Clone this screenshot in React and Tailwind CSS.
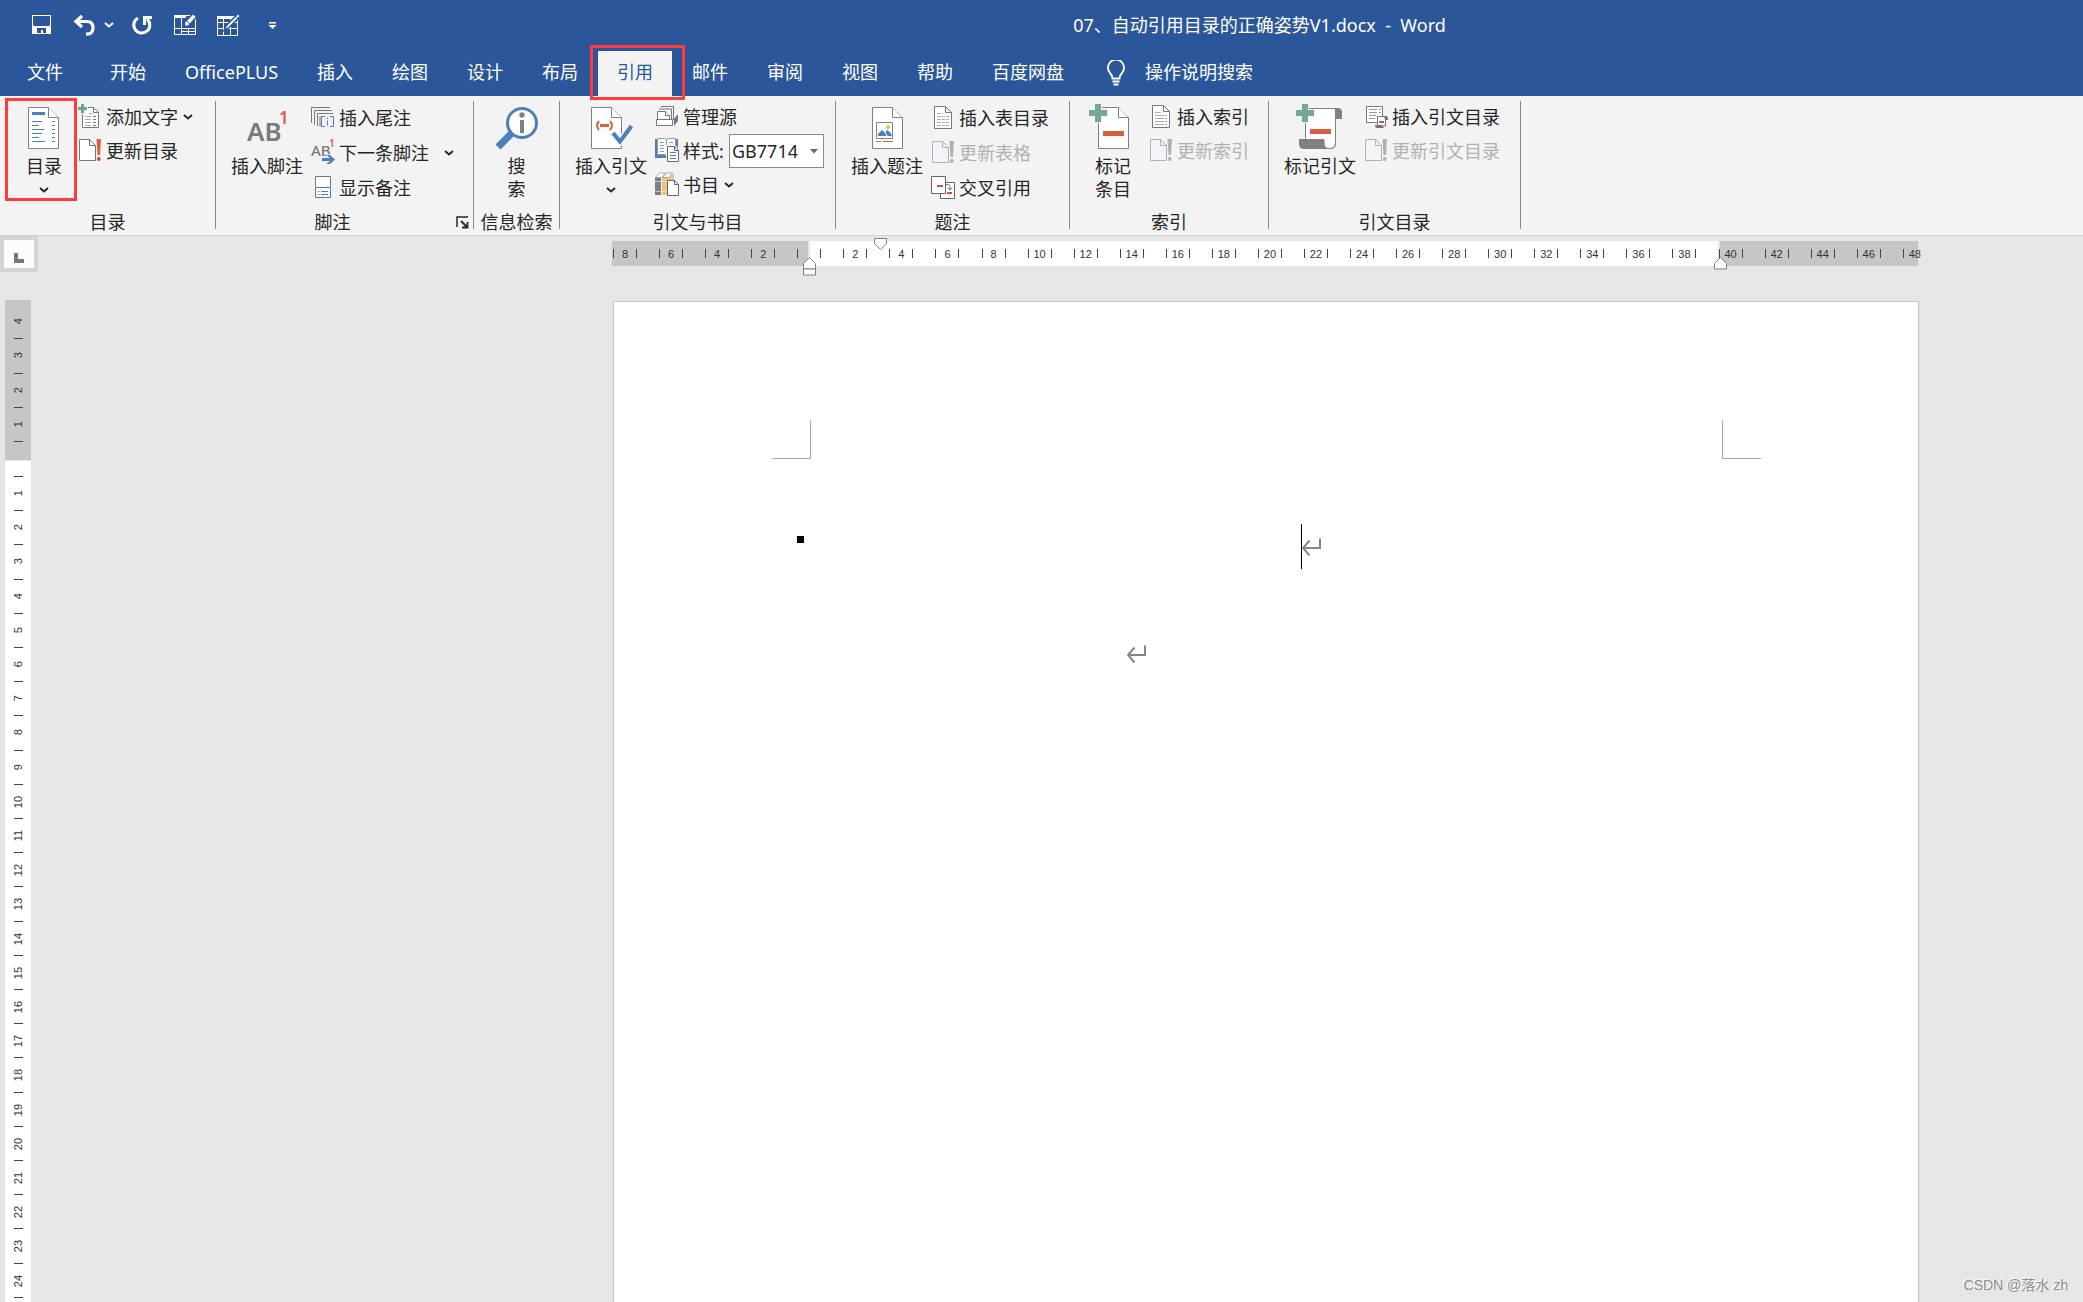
import { useState } from "react";
import clsx from "clsx";

const TABS = ["文件", "开始", "OfficePLUS", "插入", "绘图", "设计", "布局", "引用", "邮件", "审阅", "视图", "帮助", "百度网盘"];

const H_LABELS = [8, 6, 4, 2, null, 2, 4, 6, 8, 10, 12, 14, 16, 18, 20, 22, 24, 26, 28, 30, 32, 34, 36, 38, 40, 42, 44, 46, 48];
const V_TOP = [4, 3, 2, 1];
const V_BODY = Array.from({ length: 24 }, (_, i) => i + 1);

/* ── Icon helpers ─────────────────────────── */
const BigSvg = ({ children }) => (
  <svg width="48" height="44" viewBox="0 0 48 44" fill="none" className="overflow-visible" aria-hidden="true">{children}</svg>
);
const SmallSvg = ({ children }) => (
  <svg width="24" height="26" viewBox="0 0 24 26" fill="none" className="shrink-0 overflow-visible" aria-hidden="true">{children}</svg>
);
const QatSvg = ({ children }) => (
  <svg width="24" height="24" viewBox="0 0 24 24" fill="none" stroke="#fff" className="overflow-visible" aria-hidden="true">{children}</svg>
);

function Chevron() {
  return (
    <svg width="12" height="8" viewBox="0 0 12 8" fill="none" stroke="currentColor" strokeWidth="2" className="shrink-0" aria-hidden="true">
      <path d="M2 2l4 3.5L10 2" />
    </svg>
  );
}

/* page outline with a folded corner */
function BigDoc({ x }) {
  return (
    <g transform={`translate(${x} 0)`} stroke="#808080" fill="#fff">
      <path d="M.5 1.5h20l10 10v31H.5z" />
      <path d="M20.5 1.5v10h10" />
    </g>
  );
}

/* ── Large icons ──────────────────────────── */
const TocIcon = () => (
  <BigSvg>
    <BigDoc x={8} />
    <path d="M12 6h13v3H12z" fill="#4a80bb" />
    <path d="M12 15.5h10M12 19.5h7M12 23.5h12M12 27.5h10M12 31.5h7M12 35.5h13M32 15.5h3M32 19.5h3M32 23.5h3M32 27.5h3M32 31.5h3M32 35.5h3" stroke="#4a80bb" />
  </BigSvg>
);
const FootnoteIcon = () => (
  <BigSvg>
    <text x="4" y="35" fontSize="26" fontWeight="600" fill="#7a7a7a">AB</text>
    <text x="36" y="18" fontSize="17" fontWeight="600" fill="#d8603f">1</text>
  </BigSvg>
);
const LookupIcon = () => (
  <BigSvg>
    <path d="M21 25L5 41" stroke="#4a80bb" strokeWidth="7" />
    <circle cx="29" cy="17" r="14.5" fill="#fff" stroke="#4a80bb" strokeWidth="3" />
    <circle cx="29" cy="9" r="2.7" fill="#808080" />
    <path d="M27 14h4v13h-4z" fill="#808080" />
  </BigSvg>
);
const CitationIcon = () => (
  <BigSvg>
    <BigDoc x={4} />
    <path d="M12 15q-4 4.500 0 9M23 15q4 4.500 0 9" stroke="#d8603f" strokeWidth="2" />
    <path d="M13 18h9v3h-9z" fill="#d8603f" />
    <path d="M26 27l7 8.500L44.500 20" stroke="#f3f3f3" strokeWidth="7" />
    <path d="M26 27l7 8.500L44.500 20" stroke="#4a80bb" strokeWidth="4" />
  </BigSvg>
);
const CaptionIcon = () => (
  <BigSvg>
    <BigDoc x={9} />
    <path d="M13.500 16.500h16v16h-16z" stroke="#808080" fill="#fff" />
    <circle cx="25" cy="21" r="2.200" fill="#ecc57c" />
    <path d="M15 30v-2l4-4 4 4v2zM22.500 25.500l2-1.500 4 4v2h-4z" fill="#4a80bb" />
    <path d="M13 35.500h5M20 35.500h10" stroke="#d8603f" />
  </BigSvg>
);
const BigPlus = () => (
  <path d="M6-2h6v6h6v6h-6v6H6v-6H0V4h6z" fill="#75a896" stroke="#f3f3f3" strokeWidth="2" paintOrder="stroke" />
);
const MarkEntryIcon = () => (
  <BigSvg>
    <BigDoc x={9} />
    <path d="M14 25h21v5H14z" fill="#d8603f" />
    <BigPlus />
  </BigSvg>
);
const MarkCitationIcon = () => (
  <BigSvg>
    <path d="M9.500 2.500h30V38q0 4.500-5 4.500H14l-4.500-10z" fill="#fff" stroke="#808080" />
    <path d="M36 2h6q4 0 4 4v7h-6V6q0-3-4-4z" fill="#808080" />
    <path d="M3 33h25v3q0 6 5 7H8q-5 0-5-5z" fill="#808080" />
    <path d="M28 33.500V37q0 5.500 5.500 5.500t6-5.500" fill="#fff" stroke="#808080" />
    <path d="M14 23h21v5H14z" fill="#d8603f" />
    <BigPlus />
  </BigSvg>
);

/* ── Small icons ──────────────────────────── */
const AddTextIcon = () => (
  <SmallSvg>
    <path d="M4.500 3.500h11l5 5v15h-16z" fill="#fff" stroke="#777" />
    <path d="M15.500 3.500v5h5" stroke="#777" />
    <path d="M11 9.500h3M7 12.500h6M7 15.500h6M7 18.500h6M7 21.500h6" stroke="#aaa" />
    <path d="M15 12.500h3M15 15.500h3M15 18.500h3M15 21.500h3" stroke="#777" />
    <path d="M3 0h3v3h3v3H6v3H3V6H0V3h3z" fill="#6ba58c" stroke="#f3f3f3" strokeWidth="2" paintOrder="stroke" />
  </SmallSvg>
);
const UpdateIcon = ({ off }) => (
  <SmallSvg>
    <path d="M1.500 1.500h10l6 6v15h-16z" fill={off ? "#f7f2f9" : "#fff"} stroke={off ? "#b1b1b1" : "#777"} />
    <path d="M11.500 1.500v6h6" stroke={off ? "#b1b1b1" : "#777"} />
    <path d="M18.500 1h4.500l-1 16h-2.500z" fill={off ? "#b1b1b1" : "#d8603f"} />
    <circle cx="20.800" cy="21" r="2" fill={off ? "#b1b1b1" : "#d8502f"} />
  </SmallSvg>
);
const EndnoteIcon = () => (
  <SmallSvg>
    <path d="M.5 18V2.500H19M3.500 20V5.500H21M6.500 21V8.500H22M9 21.500V11" stroke="#777" />
    <path d="M14 11.500h-3.500v10H14M19 11.500h3.500v10H19" stroke="#4a80bb" />
    <path d="M16.500 15.500v5M16.500 12.500v1.500" stroke="#4a80bb" />
  </SmallSvg>
);
const NextFootnoteIcon = () => (
  <SmallSvg>
    <text x="0" y="16" fontSize="15" fontWeight="500" fill="#777">AB</text>
    <path d="M11 18h8l-3.500-3H19l5 4.500-5 4.500h-3.500l3.500-3h-8z" fill="#4a80bb" stroke="#f3f3f3" strokeWidth="1.500" paintOrder="stroke" />
    <text x="18" y="7" fontSize="10" fontWeight="600" fill="#d8603f">1</text>
  </SmallSvg>
);
const NotesIcon = () => (
  <SmallSvg>
    <path d="M4.500 12V1.500h15V12" fill="#fff" stroke="#777" />
    <path d="M4.500 12.500h15v10h-15z" fill="#fff" stroke="#4a80bb" />
    <path d="M7 16.500h1.500M7 19.500h1.500M10 16.500h7M10 19.500h7" stroke="#4a80bb" />
  </SmallSvg>
);
const SourcesIcon = () => (
  <SmallSvg>
    <path d="M6 2.500h12.500V15M4 5H16.500" stroke="#777" />
    <path d="M7.500 2.500h11V16M16.500 15V5" stroke="#777" />
    <path d="M2.500 16V7.500h8l4 4V16" fill="#fff" stroke="#777" />
    <path d="M10.500 7.500v4h4M1.500 15.500h16v6h-16z" fill="#fff" stroke="#777" />
    <path d="M19 15l4-5v7l-4 5z" fill="#777" />
  </SmallSvg>
);
const StyleIcon = () => (
  <SmallSvg>
    <path d="M0 1h23v19H0z" fill="#4a80bb" />
    <path d="M2.500.5h7l2 1 2-1h7v16h-7l-2 1-2-1h-7z" fill="#fff" stroke="#999" />
    <path d="M11.500 1v16M5 4.500h4M5 7.500h4M5 10.500h4M5 13.500h4M14 4.500h4" stroke="#999" />
    <path d="M11 7h9l5 5v13H11z" fill="#f3f3f3" />
    <path d="M12.500 8.500h7l4 4v11h-11z" fill="#fff" stroke="#666" />
    <path d="M19.500 8.500v4h4" stroke="#666" />
    <path d="M15 14.500h6M15 17.500h6M15 20.500h6" stroke="#4a80bb" />
  </SmallSvg>
);
const BooksIcon = () => (
  <SmallSvg>
    <path d="M0 6h6v17H0z" fill="#808080" />
    <path d="M7 6h6v17H7z" fill="#ecc57c" />
    <path d="M13 6l6-5v8h-6z" fill="#ecc57c" />
    <path d="M.5 5.500l4-4.500h6L6.500 5.500zM7.500 5.500l4-4.500h6l-4 4.500z" fill="#fff" stroke="#aaa" />
    <path d="M0 9.500h6M0 19.500h6M7 9.500h6M7 19.500h6" stroke="#f3f3f3" strokeOpacity=".6" />
    <path d="M12.500 8.500h7l4 4v11h-11z" fill="#fff" stroke="#666" />
    <path d="M19.500 8.500v4h4" stroke="#666" />
  </SmallSvg>
);
const ListDocIcon = ({ table }) => (
  <SmallSvg>
    <path d="M3.500 1.500h11l6 6v16h-17z" fill="#fff" stroke="#777" />
    <path d="M14.500 1.500v6h6" stroke="#777" />
    <path d="M6 8.500h6M6 11.500h12M6 14.500h12M6 17.500h12M6 20.500h12" stroke="#aaa" strokeDasharray={table ? "4 1 3 1" : "9 1"} />
  </SmallSvg>
);
const CrossRefIcon = () => (
  <SmallSvg>
    <path d="M9.500 7.500h14v16h-14z" fill="#fff" stroke="#666" />
    <path d="M.5 1.500h14v17H.5z" fill="#fff" stroke="#666" />
    <path d="M6 10h6v2H6zM16 17h5v2h-5z" fill="#d8502f" />
    <path d="M15 9.500h2.500q1.500 0 1.500 2V15M16.500 12.500l2.500 2.500 2.500-2.500" stroke="#777" />
  </SmallSvg>
);
const AuthorityIcon = () => (
  <SmallSvg>
    <path d="M2.500 2.500h16v16h-16z" fill="#fff" stroke="#777" />
    <path d="M5 5.500h8M15 5.500h2M5 8.500h8M15 8.500h2M5 11.500h7M5 14.500h6" stroke="#999" />
    <path d="M13.500 12.500h8v9.500h-8z" fill="#fff" stroke="#777" />
    <path d="M20 12h2q2 0 2 2v2h-3zM11 21h7l2 3h-7q-2 0-2-3z" fill="#777" />
    <path d="M15 17h5v2h-5z" fill="#d8502f" />
  </SmallSvg>
);

/* ── Ribbon building blocks ───────────────── */
function BigButton({ icon, lines, chevron, className }) {
  return (
    <button type="button" className={clsx("flex shrink-0 flex-col items-center pt-[5px]", className)}>
      {icon}
      <span className="mt-[5px] flex flex-col leading-[23px]">
        {lines.map((l) => <span key={l}>{l}</span>)}
      </span>
      {chevron && <span className="flex h-[23px] items-center"><Chevron /></span>}
    </button>
  );
}

function Row({ icon, text, chevron, wide, disabled }) {
  return (
    <button type="button" disabled={disabled} className="flex items-center gap-1 whitespace-nowrap disabled:text-[#b1b1b1]">
      {icon}
      <span>{text}</span>
      {chevron && <span className={wide ? "ml-[10px]" : ""}><Chevron /></span>}
    </button>
  );
}

const Rows = ({ tall, children }) => (
  <div className={clsx("-mt-px grid content-start", tall ? "auto-rows-[35px]" : "auto-rows-[34px]")}>{children}</div>
);

function Group({ label, launcher, className, children }) {
  return (
    <section aria-label={label} className="flex shrink-0">
      <div className="flex flex-col">
        <div className={clsx("flex h-[109px] items-start", className)}>{children}</div>
        <div className="flex h-6 items-center">
          <span className="flex-1 text-center leading-6 whitespace-nowrap">{label}</span>
          {launcher && (
            <button type="button" aria-label={`${label}选项`} className="w-6 pl-[7px]">
              <svg width="13" height="13" viewBox="0 0 13 13" fill="none" stroke="#262626" aria-hidden="true">
                <path d="M1 11V1h11" strokeWidth="1.500" />
                <path d="M5 5l6 6M11.500 6v5.500H6" strokeWidth="1.800" />
              </svg>
            </button>
          )}
        </div>
      </div>
      <div className="h-32 w-px bg-[#8a8a8a]" />
    </section>
  );
}

/* ── Title bar ────────────────────────────── */
function TitleBar() {
  return (
    <div className="flex h-[50px] items-center pl-[30px] text-white">
      <button type="button" aria-label="保存">
        <QatSvg>
          <path d="M2 2h19v19H2z" fill="#fff" stroke="none" />
          <path d="M3 3h17v9l-1 1H4l-1-1zM7 15h9v5h-3v-3h-2v3H7z" fill="#2b579a" stroke="none" />
        </QatSvg>
      </button>
      <button type="button" aria-label="撤消" className="ml-[19px]">
        <QatSvg>
          <path d="M9 3L3 8.500 9 14M3.500 8.500H14q6 0 6 6.500t-7 6" strokeWidth="3.200" />
        </QatSvg>
      </button>
      <button type="button" aria-label="撤消列表" className="ml-[6px]"><Chevron /></button>
      <button type="button" aria-label="重复" className="ml-[15px]">
        <QatSvg>
          <path d="M8 5a8 8 0 1 0 9 1" strokeWidth="3" />
          <path d="M14.500 12V4.500H22" strokeWidth="3" />
        </QatSvg>
      </button>
      <button type="button" aria-label="擦除表格" className="ml-[19px]">
        <QatSvg>
          <path d="M1.500 2.500h21v19h-21zM1.500 15.500h21M8.500 3v18M15.500 15v6M9 18.500h13" />
          <path d="M1 2h12v3H1z" fill="#fff" stroke="none" />
          <path d="M20 .5l3.500 3.500-8 9-4 .5V9.500z" fill="#fff" stroke="#2b579a" strokeWidth="1.500" />
          <path d="M13 7l4 4.500" stroke="#2b579a" />
        </QatSvg>
      </button>
      <button type="button" aria-label="绘制表格" className="ml-[19px]">
        <QatSvg>
          <path d="M1.500 3.500h20v19h-20zM1.500 9.500h20M1.500 15.500h20M7.500 4v18M14.500 4v18" />
          <path d="M1 3h18v3H1z" fill="#fff" stroke="none" />
          <path d="M22 .5l2.500 2.500L12.500 15 8 17.500 10 13z" fill="#fff" stroke="#2b579a" strokeWidth="1.500" />
          <path d="M19 2.500l3 3" stroke="#2b579a" />
        </QatSvg>
      </button>
      <button type="button" aria-label="自定义快速访问工具栏" className="ml-[27px]">
        <svg width="12" height="12" viewBox="0 0 12 12" fill="#fff" aria-hidden="true">
          <path d="M2 3h7v1.500H2zM1.500 6h8L5.500 10z" />
        </svg>
      </button>
      <h1 className="flex-1 pl-[157px] text-center whitespace-pre">07、自动引用目录的正确姿势V1.docx  -  Word</h1>
    </div>
  );
}

/* ── Tab strip ────────────────────────────── */
function TabStrip({ active, onPick }) {
  return (
    <nav className="flex h-[46px] items-stretch gap-px pl-2 text-white">
      {TABS.map((t) => (
        <div key={t} className={clsx("relative flex pt-px", t === "文件" && "mr-2")}>
          <button
            type="button"
            onClick={() => onPick(t)}
            className={clsx("px-[19px] pb-[3px] whitespace-nowrap", active === t && "bg-[#f3f3f3] text-[#2b579a]")}
          >
            {t}
          </button>
          {t === "引用" && (
            <span className="pointer-events-none absolute -top-[5px] -right-[13px] -bottom-[4px] -left-[8px] z-10 border-3 border-[#ff3b3b]" />
          )}
        </div>
      ))}
      <label htmlFor="tell-me" className="ml-[22px] flex items-center pb-px">
        <svg width="20" height="26" viewBox="0 0 20 26" fill="none" stroke="#fff" strokeWidth="1.800" aria-hidden="true">
          <path d="M6.500 18.500q0-3-2.500-5.500a8 8 0 1 1 12 0q-2.500 2.500-2.500 5.500zM6.500 21.500h7M7.500 24.500h5" />
        </svg>
      </label>
      <input id="tell-me" type="text" placeholder="操作说明搜索" className="ml-[18px] w-40 bg-transparent pb-[3px] text-white outline-none placeholder:text-white" />
    </nav>
  );
}

function Ribbon() {
  return (
    <div className="flex items-start overflow-x-clip border-b border-[#d2d2d2] bg-[#f3f3f3] pt-[5px] pb-px">
      <Group label="目录" className="w-[215px] pl-[10px]">
        <div className="relative">
          <BigButton icon={<TocIcon />} lines={["目录"]} chevron className="w-[68px]" />
          <span className="pointer-events-none absolute -top-[3px] right-px bottom-0 -left-[5px] border-3 border-[#ff3b3b]" />
        </div>
        <Rows>
          <Row icon={<AddTextIcon />} text="添加文字" chevron />
          <Row icon={<UpdateIcon />} text="更新目录" />
        </Rows>
      </Group>

      <Group label="脚注" launcher className="w-[257px] gap-1 pl-[11px]">
        <BigButton icon={<FootnoteIcon />} lines={["插入脚注"]} className="w-20" />
        <Rows tall>
          <Row icon={<EndnoteIcon />} text="插入尾注" />
          <Row icon={<NextFootnoteIcon />} text="下一条脚注" chevron wide />
          <Row icon={<NotesIcon />} text="显示备注" />
        </Rows>
      </Group>

      <Group label="信息检索" className="w-[85px] justify-center">
        <BigButton icon={<LookupIcon />} lines={["搜", "索"]} className="w-20" />
      </Group>

      <Group label="引文与书目" className="w-[275px] gap-1 pl-[11px]">
        <BigButton icon={<CitationIcon />} lines={["插入引文"]} chevron className="w-20" />
        <Rows>
          <Row icon={<SourcesIcon />} text="管理源" />
          <div className="flex items-center gap-1">
            <StyleIcon />
            <label htmlFor="cite-style" className="w-[42px] whitespace-nowrap">样式:</label>
            <div className="relative">
              <select id="cite-style" className="h-[34px] w-[95px] appearance-none border border-[#8a8a8a] bg-white pl-[2px]">
                <option>GB7714</option>
                <option>APA</option>
              </select>
              <svg width="8" height="5" viewBox="0 0 8 5" fill="#666" className="pointer-events-none absolute top-[15px] right-[6px]" aria-hidden="true">
                <path d="M0 0h8L4 4.500z" />
              </svg>
            </div>
          </div>
          <Row icon={<BooksIcon />} text="书目" chevron />
        </Rows>
      </Group>

      <Group label="题注" className="w-[233px] gap-1 pl-[11px]">
        <BigButton icon={<CaptionIcon />} lines={["插入题注"]} className="w-20" />
        <Rows tall>
          <Row icon={<ListDocIcon table />} text="插入表目录" />
          <Row icon={<UpdateIcon off />} text="更新表格" disabled />
          <Row icon={<CrossRefIcon />} text="交叉引用" />
        </Rows>
      </Group>

      <Group label="索引" className="w-[198px] gap-1 pl-[11px]">
        <BigButton icon={<MarkEntryIcon />} lines={["标记", "条目"]} className="w-16" />
        <Rows>
          <Row icon={<ListDocIcon />} text="插入索引" />
          <Row icon={<UpdateIcon off />} text="更新索引" disabled />
        </Rows>
      </Group>

      <Group label="引文目录" className="w-[251px] gap-1 pl-[11px]">
        <BigButton icon={<MarkCitationIcon />} lines={["标记引文"]} className="w-20" />
        <Rows>
          <Row icon={<AuthorityIcon />} text="插入引文目录" />
          <Row icon={<UpdateIcon off />} text="更新引文目录" disabled />
        </Rows>
      </Group>
    </div>
  );
}

/* ── Rulers ───────────────────────────────── */
const HTick = () => <span className="h-[9px] w-px bg-[#444]" />;
const VTick = () => <span className="h-px w-[9px] shrink-0 bg-[#444]" />;
const VLabel = ({ n }) => (
  <span className="flex flex-1 rotate-180 items-center justify-center leading-[11px] [writing-mode:vertical-rl]">{n}</span>
);

function IndentMarker({ kind, className }) {
  return (
    <svg width="13" height="19" viewBox="0 0 13 19" fill="#fff" stroke="#808080" className={clsx("absolute", className)} aria-hidden="true">
      {kind === "first" && <path d="M.5.500h12v5l-6 6-6-6z" />}
      {kind !== "first" && <path d="M.5 12V6.500l6-6 6 6V12z" />}
      {kind === "left" && <path d="M.5 12h12v6H.5z" />}
    </svg>
  );
}

function HorizontalRuler() {
  return (
    <div className="relative mr-[165px] ml-[612px] flex h-[25px] gap-[2px] font-['Liberation_Sans',sans-serif] text-[11px] text-[#333]">
      <div className="w-[196px] bg-[#c6c6c6]" />
      <div className="flex-1 bg-white" />
      <div className="w-[198px] bg-[#c6c6c6]" />
      {/* graduations run across all three bands */}
      <div className="absolute inset-y-0 -right-[20px] -left-[10px] flex">
        {H_LABELS.map((n, i) => (
          <div key={i} className="flex flex-1 basis-0 items-center justify-center">
            <HTick />
            <span className="w-[22px] text-center">{n}</span>
            {i < H_LABELS.length - 1 && <HTick />}
            {i === H_LABELS.length - 1 && <span className="w-px" />}
          </div>
        ))}
      </div>
      <IndentMarker kind="first" className="-top-[3px] left-[262px]" />
      <IndentMarker kind="left" className="top-[16px] left-[191px]" />
      <IndentMarker kind="right" className="top-[16px] right-[191px]" />
    </div>
  );
}

function VerticalRuler() {
  return (
    <div className="ml-[5px] flex w-[26px] shrink-0 flex-col gap-px font-['Liberation_Sans',sans-serif] text-[11px] text-[#333]">
      <div className="flex h-[160px] flex-col items-center bg-[#c6c6c6] pt-[5px] pb-[18px]">
        {V_TOP.map((n) => (
          <div key={n} className="flex flex-1 flex-col items-center">
            <VLabel n={n} />
            <VTick />
          </div>
        ))}
      </div>
      <div className="flex flex-1 flex-col items-center bg-white pt-[15px] pb-1">
        {V_BODY.map((n) => (
          <div key={n} className="flex flex-1 flex-col items-center">
            <VTick />
            <VLabel n={n} />
          </div>
        ))}
        <VTick />
      </div>
    </div>
  );
}

/* ── Document ─────────────────────────────── */
function ReturnMark() {
  return (
    <svg width="20" height="18" viewBox="0 0 20 18" fill="none" stroke="#858585" strokeWidth="2" aria-hidden="true">
      <path d="M18 .5V10H1.500M7.500 2.500L1 10 7.500 17.500" />
    </svg>
  );
}

function Page() {
  return (
    <main className="mt-px mr-[164px] ml-[582px] flex-1 border border-b-0 border-[#c6c6c6] bg-white pt-[118px]">
      <div className="flex justify-between pr-[157px] pl-[158px]">
        <div className="h-[39px] w-[39px] border-r border-b border-[#aaa]" />
        <div className="h-[39px] w-[39px] border-b border-l border-[#aaa]" />
      </div>
      <div className="mt-[65px] flex h-[45px] items-center pr-[200px] pl-[183px]">
        <div className="mb-[14px] h-[7px] w-[7px] bg-black" />
        <div className="flex flex-1 items-center justify-center pl-[101px]">
          <span className="h-[45px] w-px bg-black" />
          <ReturnMark />
        </div>
      </div>
      <div className="mt-[76px] flex pl-[513px]"><ReturnMark /></div>
    </main>
  );
}

export default function App() {
  const [tab, setTab] = useState("引用");

  return (
    <div className="flex h-screen flex-col overflow-hidden bg-[#e6e6e6] font-['Noto_Sans','Noto_Sans_CJK_SC',sans-serif] text-[18px] leading-6 text-[#262626]">
      <header className="shrink-0 bg-[#2b579a]">
        <TitleBar />
        <TabStrip active={tab} onPick={setTab} />
      </header>
      <Ribbon />

      <div className="relative h-16 shrink-0 pt-[5px]">
        <HorizontalRuler />
        <button type="button" aria-label="制表符" className="absolute top-0 left-0 flex h-9 w-[38px] items-center justify-center border-4 border-[#d4d4d4] bg-[#fcfcfc]">
          <span className="mt-2 h-[10px] w-[10px] border-b-4 border-l-4 border-[#777]" />
        </button>
      </div>

      <div className="flex min-h-0 flex-1">
        <VerticalRuler />
        <Page />
      </div>

      <p className="absolute right-[15px] bottom-[5px] font-['Liberation_Sans','Noto_Sans_CJK_SC',sans-serif] text-[14px] text-[#8c8c8c] [text-shadow:-1px_-1px_0_#fff]">
        CSDN @落水 zh
      </p>
    </div>
  );
}
